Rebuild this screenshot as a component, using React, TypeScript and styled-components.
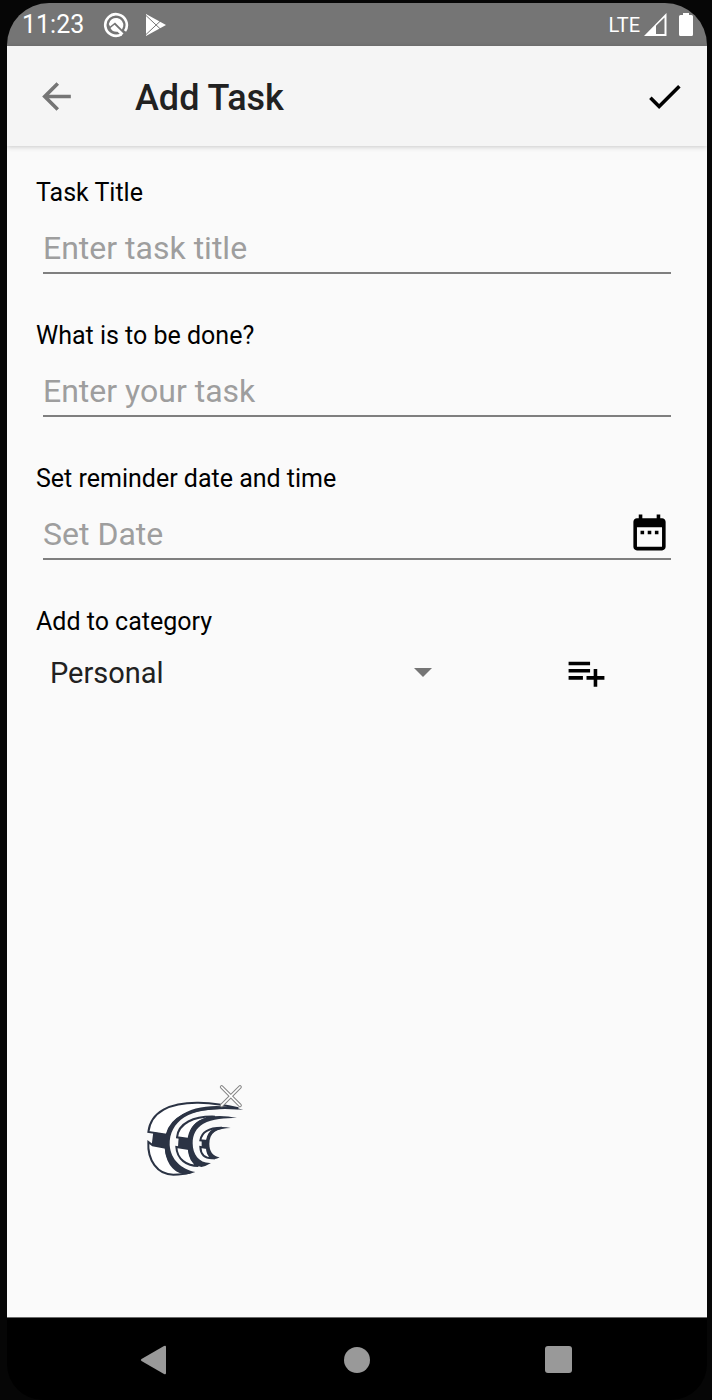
import React from "react";
import styled, { createGlobalStyle } from "styled-components";

const GlobalStyle = createGlobalStyle`
  *, *::before, *::after { box-sizing: border-box; }
  body { margin: 0; background: #060606; }
  body, button, input, select { font-family: Roboto, "Liberation Sans", sans-serif; }
`;

const Device = styled.div`
  display: flex;
  flex-direction: column;
  min-height: 100vh;
  padding: 3px 5px 0 7px;
  background: #060606;
`;

const Screen = styled.div`
  flex: 1;
  display: flex;
  flex-direction: column;
  overflow: hidden;
  border-radius: 42px 42px 36px 36px;
`;

const StatusBar = styled.div`
  display: flex;
  align-items: center;
  justify-content: space-between;
  height: 43px;
  padding: 0 14px 0 15px;
  background: #757575;
  color: #fff;
`;

const StatusGroup = styled.div<{ $gap: number }>`
  display: flex;
  align-items: center;
  gap: ${(p) => p.$gap}px;
`;

const Clock = styled.span`
  font-size: 25px;
  line-height: 44px;
`;

const Network = styled.span`
  font-family: "Liberation Sans Narrow", Roboto, sans-serif;
  font-size: 20px;
  line-height: 42px;
`;

const AppBar = styled.header`
  position: relative;
  display: flex;
  align-items: center;
  height: 100px;
  padding: 0 21px 0 28px;
  background: #f5f5f5;
  box-shadow: 0 1px 5px rgba(0, 0, 0, 0.2);
  z-index: 1;
`;

const Title = styled.h1`
  flex: 1;
  margin: 0 0 0 57px;
  padding-top: 3px;
  font-size: 36px;
  font-weight: 500;
  line-height: 44px;
  color: #212121;
`;

const IconButton = styled.button<{ $color?: string }>`
  display: flex;
  flex: none;
  padding: 0;
  border: 0;
  background: none;
  color: ${(p) => p.$color ?? "#000"};
  cursor: pointer;
`;

const Form = styled.form`
  position: relative;
  flex: 1;
  padding: 30px 29px 0;
  background: #fafafa;
`;

const Field = styled.div`
  height: 143px;
`;

const Label = styled.label`
  display: block;
  font-size: 25px;
  line-height: 34px;
  color: #000;
`;

const Control = styled.div`
  display: flex;
  align-items: center;
  height: 52px;
  margin: 12px 7px 0;
  padding-bottom: 2px;
  border-bottom: 2px solid #7f7f7f;
`;

const TextInput = styled.input`
  flex: 1;
  min-width: 0;
  height: 48px;
  padding: 4px 0 0;
  border: 0;
  outline: 0;
  background: none;
  font-size: 32px;
  color: #212121;
  &::placeholder { color: #9e9e9e; opacity: 1; }
`;

const CategoryRow = styled.div`
  display: grid;
  grid-template-columns: 5fr 2fr;
  align-items: center;
  justify-items: center;
  height: 66px;
`;

const SelectBox = styled.div`
  display: flex;
  align-items: center;
  justify-self: stretch;
  margin-right: 63px;
`;

const Select = styled.select`
  flex: 1;
  height: 44px;
  margin-right: -30px;
  padding: 2px 44px 0 14px;
  border: 0;
  outline: 0;
  appearance: none;
  background: none;
  font-size: 29px;
  color: #212121;
`;

const Bubble = styled.div`
  position: absolute;
  left: 123px;
  bottom: 127px;
  display: flex;
`;

const NavBar = styled.nav`
  display: flex;
  align-items: center;
  justify-content: center;
  gap: 158px;
  height: 83px;
  border-top: 1px solid #6a6a6a;
  background: #000;
  padding-top: 2px;
`;

function AssistantIcon() {
  return (
    <svg width="26" height="26" viewBox="0 0 26 26" aria-hidden="true">
      <path d="M18.500 22.300A10.800 10.800 0 1 1 22 19" fill="none" stroke="#fff" strokeWidth="2.6" />
      <path d="M5.800 12A7.300 7.300 0 0 1 20.200 14.500L19 17.500 12 10.500 7 14.500z" fill="#fff" />
      <path d="M7.500 16 11.500 12.800 20.500 21.500 18.500 23.500 14.500 19.800A7 7 0 0 1 7.500 16z" fill="#fff" />
    </svg>
  );
}

function PlayIcon() {
  return (
    <svg width="22" height="24" viewBox="0 0 22 24" aria-hidden="true">
      <path d="M1 1 21 12 1 23z" fill="#fff" />
      <path d="M1 2.500 17 17.500M1 21.500 17 6.500" stroke="#757575" strokeWidth="1" />
    </svg>
  );
}

function SignalIcon() {
  return (
    <svg width="23" height="23" viewBox="0 0 23 23" aria-hidden="true">
      <path d="M0 23 22.500 0V23zM12 12.800V21H20.500V4.600z" fill="#fff" fillRule="evenodd" />
    </svg>
  );
}

function BatteryIcon() {
  return (
    <svg width="14" height="23" viewBox="0 0 14 23" aria-hidden="true">
      <path d="M4 0h6v2h2.500a1.500 1.500 0 0 1 1.500 1.500v18a1.500 1.500 0 0 1-1.500 1.500h-11A1.500 1.500 0 0 1 0 21.500v-18A1.500 1.500 0 0 1 1.500 2H4z" fill="#fff" />
    </svg>
  );
}

function MaterialIcon({ d }: { d: string }) {
  return (
    <svg width="43" height="43" viewBox="0 0 24 24" fill="currentColor" aria-hidden="true">
      <path d={d} />
    </svg>
  );
}

const BACK = "M20 11H7.830l5.590-5.590L12 4l-8 8 8 8 1.410-1.410L7.830 13H20v-2z";
const CHECK = "M9 16.170L4.830 12l-1.420 1.410L9 19 21 7l-1.410-1.410z";
const DATE =
  "M9 11H7v2h2v-2zm4 0h-2v2h2v-2zm4 0h-2v2h2v-2zm2-7h-1V2h-2v2H8V2H6v2H5c-1.110 0-1.990.9-1.990 2L3 20c0 1.100.89 2 2 2h14c1.100 0 2-.9 2-2V6c0-1.100-.9-2-2-2zm0 16H5V9h14v11z";
const LIST_ADD =
  "M14 10H2v2h12v-2zm0-4H2v2h12V6zm4 8v-4h-2v4h-4v2h4v4h2v-4h4v-2h-4zM2 16h8v-2H2v2z";

function BubbleLogo() {
  return (
    <svg width="130" height="120" viewBox="0 0 390 360" aria-hidden="true">
      <g fill="#fff" stroke="#2b3344" strokeWidth="6" strokeLinejoin="miter">
        <path d="M55 186C62 125 120 97 205 98Q270 100 325 115C200 108 125 130 110 194z" />
        <path d="M55 216C52 270 82 314 130 314Q160 314 180 308C140 300 112 285 107 233L68 226z" />
        <path d="M141 202C145 160 190 138 255 140C202 148 182 170 178 207z" />
        <path d="M139 231C141 268 170 288 205 288C188 280 178 262 177 237z" />
        <path d="M211 211C215 185 240 173 275 173C248 178 235 192 232 213z" />
        <path d="M211 231C212 254 224 265 246 265C236 258 231 248 231 234z" />
      </g>
      <g fill="#2b3344">
        <path d="M340 119C270 101 195 104 145 141C117 163 104 194 104 225C104 270 125 308 165 313Q180 313 196 306C155 298 122 270 119 225C118 190 133 162 163 142C207 115 275 115 340 119z" />
        <path d="M321 144C280 135 237 135 206 152C183 167 172 190 172 220C172 256 187 287 214 291Q229 288 243 279C208 281 188 254 188 220C188 194 198 174 220 161C247 146 285 144 321 144z" />
        <path d="M302 174C276 168 254 171 241 183C232 192 228 206 228 220C228 244 237 264 252 268Q262 267 269 262C248 259 238 243 238 222C238 205 243 193 254 185C266 177 284 175 302 174z" />
        <path d="M70 186 114 195V233L65 225z" />
        <path d="M146 202 180 207V238L144 231z" />
        <path d="M215 210 234 213V235L215 231z" />
      </g>
      <path d="M275 51 330 106M330 51 275 106" stroke="#858585" strokeWidth="11" strokeLinecap="round" />
      <path d="M275 51 330 106M330 51 275 106" stroke="#fff" strokeWidth="5" strokeLinecap="round" />
    </svg>
  );
}

export default function App() {
  return (
    <>
      <GlobalStyle />
      <Device>
        <Screen>
          <StatusBar>
            <StatusGroup $gap={19}>
              <Clock>11:23</Clock>
              <StatusGroup $gap={16}>
                <AssistantIcon />
                <PlayIcon />
              </StatusGroup>
            </StatusGroup>
            <StatusGroup $gap={12}>
              <StatusGroup $gap={4}>
                <Network>LTE</Network>
                <SignalIcon />
              </StatusGroup>
              <BatteryIcon />
            </StatusGroup>
          </StatusBar>
          <AppBar>
            <IconButton type="button" aria-label="Back" $color="#757575">
              <MaterialIcon d={BACK} />
            </IconButton>
            <Title>Add Task</Title>
            <IconButton type="submit" form="task-form" aria-label="Save task">
              <MaterialIcon d={CHECK} />
            </IconButton>
          </AppBar>
          <Form id="task-form" onSubmit={(e) => e.preventDefault()}>
            <Field>
              <Label htmlFor="title">Task Title</Label>
              <Control>
                <TextInput id="title" placeholder="Enter task title" />
              </Control>
            </Field>
            <Field>
              <Label htmlFor="task">What is to be done?</Label>
              <Control>
                <TextInput id="task" placeholder="Enter your task" />
              </Control>
            </Field>
            <Field>
              <Label htmlFor="date">Set reminder date and time</Label>
              <Control>
                <TextInput id="date" placeholder="Set Date" />
                <IconButton type="button" aria-label="Pick a date">
                  <MaterialIcon d={DATE} />
                </IconButton>
              </Control>
            </Field>
            <Label htmlFor="category">Add to category</Label>
            <CategoryRow>
              <SelectBox>
                <Select id="category" defaultValue="Personal">
                  <option>Personal</option>
                </Select>
                <svg width="18" height="9" viewBox="0 0 18 9" aria-hidden="true">
                  <path d="M0 0h18L9 9z" fill="#757575" />
                </svg>
              </SelectBox>
              <IconButton type="button" aria-label="Add category">
                <MaterialIcon d={LIST_ADD} />
              </IconButton>
            </CategoryRow>
            <Bubble>
              <BubbleLogo />
            </Bubble>
          </Form>
          <NavBar>
            <IconButton type="button" aria-label="Back" $color="#999">
              <svg width="44" height="44" viewBox="0 0 44 44" fill="currentColor">
                <path d="M8.500 21 31 8q2-1 2 1V35q0 2-2 1L8.500 23q-1.500-1 0-2z" />
              </svg>
            </IconButton>
            <IconButton type="button" aria-label="Home" $color="#999">
              <svg width="44" height="44" viewBox="0 0 44 44" fill="currentColor">
                <circle cx="22" cy="22" r="13" />
              </svg>
            </IconButton>
            <IconButton type="button" aria-label="Recent apps" $color="#999">
              <svg width="44" height="44" viewBox="0 0 44 44" fill="currentColor">
                <rect x="8" y="8" width="27" height="27" rx="3" />
              </svg>
            </IconButton>
          </NavBar>
        </Screen>
      </Device>
    </>
  );
}
